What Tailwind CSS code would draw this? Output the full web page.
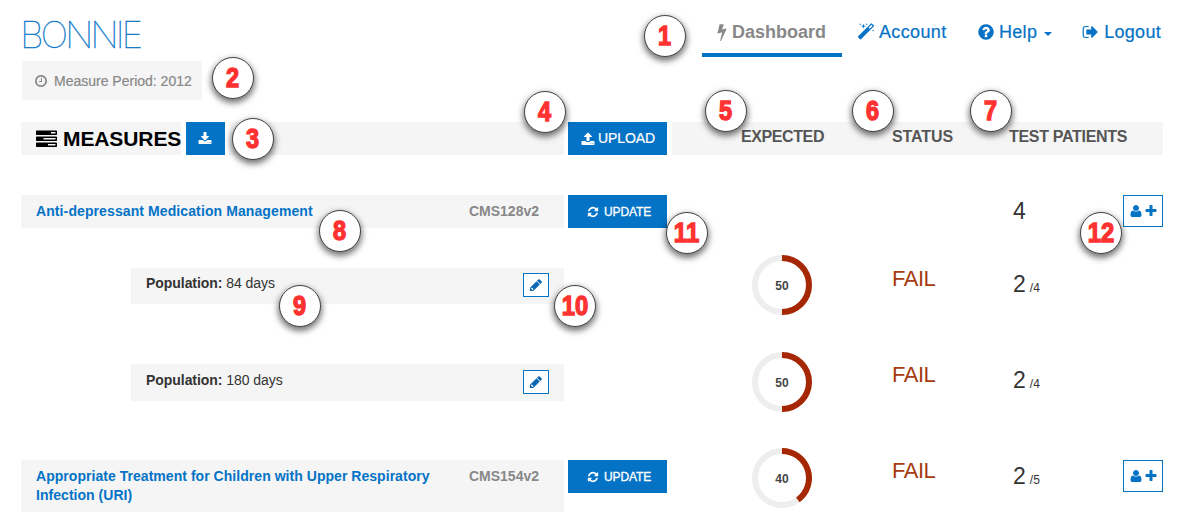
<!DOCTYPE html>
<html lang="en">
<head>
<meta charset="utf-8">
<title>Bonnie</title>
<script src="https://cdn.jsdelivr.net/npm/@tailwindcss/browser@4"></script>
</head>
<body class="relative h-[528px] w-[1187px] overflow-hidden bg-white font-['Liberation_Sans',Arial,sans-serif] text-[14px] leading-5 text-[#333]">
<svg class="hidden">
  <symbol id="pencil" viewBox="0 0 1792 1792"><path d="M491 1536l91-91-235-235-91 91v107h128v128h107zm469-1120l416 416-832 832h-416v-416zm683 96q0 53-37 90l-166 166-416-416 166-165q36-38 90-38 53 0 91 38l235 234q37 39 37 91z"/></symbol>
  <symbol id="plus" viewBox="0 0 1792 1792"><path d="M1600 736v192q0 40-28 68t-68 28h-416v416q0 40-28 68t-68 28h-192q-40 0-68-28t-28-68v-416h-416q-40 0-68-28t-28-68v-192q0-40 28-68t68-28h416v-416q0-40 28-68t68-28h192q40 0 68 28t28 68v416h416q40 0 68 28t28 68z"/></symbol>
  <symbol id="user" viewBox="0 0 1792 1792"><path d="M1600 1405q0 120-73 189.500t-194 69.500h-874q-121 0-194-69.500t-73-189.500q0-53 3.500-103.500t14-109 26.500-108.500 43-97.500 62-81 85.500-53.500 111.500-20q9 0 42 21.500t74.500 48 108 48 133.500 21.500 133.500-21.500 108-48 74.500-48 42-21.500q61 0 111.500 20t85.500 53.500 62 81 43 97.500 26.500 108.500 14 109 3.500 103.500zm-320-893q0 159-112.500 271.500t-271.500 112.500-271.500-112.500-112.500-271.500 112.500-271.500 271.500-112.500 271.500 112.500 112.500 271.500z"/></symbol>
  <symbol id="refresh" viewBox="0 0 1792 1792"><path d="M1639 1056q0 5-1 7-64 268-268 434.5t-478 166.5q-146 0-282.5-55t-243.5-157l-129 129q-19 19-45 19t-45-19-19-45v-448q0-26 19-45t45-19h448q26 0 45 19t19 45-19 45l-137 137q71 66 161 102t187 36q134 0 250-65t186-179q11-17 53-117 8-23 30-23h192q13 0 22.500 9.500t9.500 22.500zm25-800v448q0 26-19 45t-45 19h-448q-26 0-45-19t-19-45 19-45l138-138q-148-137-349-137-134 0-250 65t-186 179q-11 17-53 117-8 23-30 23h-199q-13 0-22.500-9.500t-9.500-22.500v-7q65-268 270-434.500t480-166.500q146 0 284 55.500t245 156.500l130-129q19-19 45-19t45 19 19 45z"/></symbol>
  <symbol id="download" viewBox="0 0 1792 1792"><path d="M1344 1344q0-26-19-45t-45-19-45 19-19 45 19 45 45 19 45-19 19-45zm256 0q0-26-19-45t-45-19-45 19-19 45 19 45 45 19 45-19 19-45zm128-224v320q0 40-28 68t-68 28h-1472q-40 0-68-28t-28-68v-320q0-40 28-68t68-28h465l135 136q58 56 136 56t136-56l136-136h464q40 0 68 28t28 68zm-325-569q17 41-14 70l-448 448q-18 19-45 19t-45-19l-448-448q-31-29-14-70 17-39 59-39h256v-448q0-26 19-45t45-19h256q26 0 45 19t19 45v448h256q42 0 59 39z"/></symbol>
  <symbol id="upload" viewBox="0 0 1792 1792"><path d="M1344 1472q0-26-19-45t-45-19-45 19-19 45 19 45 45 19 45-19 19-45zm256 0q0-26-19-45t-45-19-45 19-19 45 19 45 45 19 45-19 19-45zm128-224v320q0 40-28 68t-68 28h-1472q-40 0-68-28t-28-68v-320q0-40 28-68t68-28h427q21 56 70.500 92t110.500 36h256q61 0 110.500-36t70.500-92h427q40 0 68 28t28 68zm-325-648q-17 40-59 40h-256v448q0 26-19 45t-45 19h-256q-26 0-45-19t-19-45v-448h-256q-42 0-59-40-17-39 14-69l448-448q18-19 45-19t45 19l448 448q31 30 14 69z"/></symbol>
  <symbol id="clock" viewBox="0 0 1792 1792"><path d="M1024 544v448q0 14-9 23t-23 9h-320q-14 0-23-9t-9-23v-64q0-14 9-23t23-9h224v-352q0-14 9-23t23-9h64q14 0 23 9t9 23zm416 352q0-148-73-273t-198-198-273-73-273 73-198 198-73 273 73 273 198 198 273 73 273-73 198-198 73-273zm224 0q0 209-103 385.500t-279.500 279.500-385.500 103-385.500-103-279.500-279.500-103-385.500 103-385.500 279.500-279.500 385.500-103 385.500 103 279.500 279.500 103 385.500z"/></symbol>
  <symbol id="question" viewBox="0 0 1792 1792"><path d="M1024 1376v-192q0-14-9-23t-23-9h-192q-14 0-23 9t-9 23v192q0 14 9 23t23 9h192q14 0 23-9t9-23zm256-672q0-88-55.500-163t-138.500-116-170-41q-243 0-371 213-15 24 8 42l132 100q7 6 19 6 16 0 25-12 53-68 86-92 34-24 86-24 48 0 85.500 26t37.500 59q0 38-20 61t-68 45q-63 28-115.500 86.500t-52.500 125.500v36q0 14 9 23t23 9h192q14 0 23-9t9-23q0-19 21.500-49.500t54.500-49.500q32-18 49-28.500t46-35 44.500-48 28-60.500 12.500-81zm384 192q0 209-103 385.500t-279.500 279.500-385.500 103-385.500-103-279.500-279.500-103-385.500 103-385.500 279.500-279.500 385.500-103 385.500 103 279.500 279.500 103 385.500z"/></symbol>
  <symbol id="signout" viewBox="0 0 1792 1792"><path d="M704 1440q0 4 1 20t.5 26.500-3 23.500-10 19.500-20.500 6.500h-320q-119 0-203.500-84.500t-84.500-203.500v-704q0-119 84.500-203.500t203.500-84.500h320q13 0 22.500 9.500t9.500 22.500q0 4 1 20t.5 26.500-3 23.500-10 19.500-20.500 6.500h-320q-66 0-113 47t-47 113v704q0 66 47 113t113 47h312l11.500 1 11.500 3 8 5.500 7 9 2 13.500zm928-544q0 26-19 45l-544 544q-19 19-45 19t-45-19-19-45v-288h-448q-26 0-45-19t-19-45v-384q0-26 19-45t45-19h448v-288q0-26 19-45t45-19 45 19l544 544q19 19 19 45z"/></symbol>
  <symbol id="bolt" viewBox="0 0 1792 1792"><path d="M1333 566q18 20 7 44l-540 1157q-13 25-42 25-4 0-14-2-17-5-25.500-19t-4.500-30l197-808-406 101q-4 1-12 1-18 0-31-11-18-15-13-39l201-825q4-14 16-23t28-9h328q19 0 32 12.500t13 29.500q0 8-5 18l-171 463 396-98q8-2 12-2 19 0 34 15z"/></symbol>
  <symbol id="magic" viewBox="0 0 1792 1792"><path d="M1254 581l293-293-107-107-293 293zm447-293q0 27-18 45l-1286 1286q-18 18-45 18t-45-18l-198-198q-18-18-18-45t18-45l1286-1286q18-18 45-18t45 18l198 198q18 18 18 45zm-1351-190l98 30-98 30-30 98-30-98-98-30 98-30 30-98zm350 162l196 60-196 60-60 196-60-196-196-60 196-60 60-196zm930 478l98 30-98 30-30 98-30-98-98-30 98-30 30-98zm-640-640l98 30-98 30-30 98-30-98-98-30 98-30 30-98z"/></symbol>
  <symbol id="tasks" viewBox="0 0 1792 1792"><path d="M1024 1408h640v-128h-640v128zm-384-512h1024v-128h-1024v128zm640-512h384v-128h-384v128zm512 832v256q0 26-19 45t-45 19h-1664q-26 0-45-19t-19-45v-256q0-26 19-45t45-19h1664q26 0 45 19t19 45zm0-512v256q0 26-19 45t-45 19h-1664q-26 0-45-19t-19-45v-256q0-26 19-45t45-19h1664q26 0 45 19t19 45zm0-512v256q0 26-19 45t-45 19h-1664q-26 0-45-19t-19-45v-256q0-26 19-45t45-19h1664q26 0 45 19t19 45z"/></symbol>
</svg>

<header class="flex h-[122px] justify-between pl-[22px] pr-[26px]">
  <div class="flex flex-col items-start pt-[14px]">
    <h1 class="-ml-[2px] h-[47px] font-[Inter,sans-serif] text-[37px] font-thin leading-[42px] tracking-[-3.2px] text-[#0473c6] [-webkit-text-stroke:0.3px_#0473c6]">BONNIE</h1>
    <div class="flex h-[39px] w-[180px] items-center gap-[6px] bg-[#f5f5f5] pl-3 text-[#888]">
      <svg class="size-[14px] fill-current"><use href="#clock"/></svg><span class="whitespace-nowrap [-webkit-text-stroke:0.2px_#888]">Measure Period: 2012</span>
    </div>
  </div>
  <nav class="flex h-[57px] text-[18px] leading-[22px] text-[#0473c6]">
    <a class="flex w-[140px] border-b-4 border-[#0473c6] pl-[11px] pt-[21px] font-bold text-[#888]"><svg class="mt-[2px] size-[18px] fill-current"><use href="#bolt"/></svg><span class="ml-[1px]">Dashboard</span></a>
    <a class="flex w-[120px] pl-[15px] pt-[21px] [-webkit-text-stroke:0.2px_#0473c6]"><svg class="mt-[2px] size-[18px] fill-current"><use href="#magic"/></svg><span class="ml-[4px] tracking-[0.35px]">Account</span></a>
    <a class="flex w-[105px] pl-[15px] pt-[21px] [-webkit-text-stroke:0.2px_#0473c6]"><svg class="mt-[2px] size-[18px] fill-current stroke-none"><use href="#question"/></svg><span class="ml-[4px] tracking-[0.3px]">Help</span><i class="ml-[7px] mt-[11px] h-0 border-x-4 border-t-4 border-x-transparent border-t-[#0473c6]"></i></a>
    <a class="flex w-[94px] pl-[15px] pt-[21px] [-webkit-text-stroke:0.2px_#0473c6]"><svg class="mt-[2px] size-[18px] fill-current"><use href="#signout"/></svg><span class="ml-[5px] tracking-[0.3px]">Logout</span></a>
  </nav>
</header>

<main class="ml-[21px] w-[1142px]">
  <div class="flex h-[33px]">
    <div class="flex w-[543px]">
      <h2 class="flex w-[160px] items-center bg-[#f5f5f5] pl-[15px] text-[21px] font-bold text-black"><svg class="mt-[2px] size-[21px] shrink-0 fill-current"><use href="#tasks"/></svg><span class="ml-[6px] mt-[1px] tracking-[-0.1px]">MEASURES</span></h2>
      <button class="ml-[4.500px] grid w-[39px] place-items-center bg-[#0473c6]"><svg class="size-[14px] fill-white"><use href="#download"/></svg></button>
      <div class="ml-[4.500px] flex-1 bg-[#f5f5f5]"></div>
    </div>
    <button class="ml-[4px] flex w-[99px] items-center justify-center bg-[#0473c6] pl-px text-white"><svg class="size-[14px] fill-current"><use href="#upload"/></svg><span class="-mt-[1px] ml-[3px] tracking-[-0.1px] [-webkit-text-stroke:0.2px_white]">UPLOAD</span></button>
    <div class="ml-[5px] flex w-[491px] bg-[#f5f5f5] pl-[69px] pt-[5px] text-[16px] font-bold tracking-[-0.4px] text-[#555]">
      <span class="w-[151px]">EXPECTED</span><span class="w-[117px] tracking-[-0.1px]">STATUS</span><span class="tracking-[-0.3px]">TEST PATIENTS</span>
    </div>
  </div>

  <div class="mt-10 flex h-[33px]">
    <div class="flex w-[543px] justify-between bg-[#f5f5f5] pl-[15px] pr-[25px] pt-[6px] font-bold"><a class="tracking-[0.1px] text-[#0473c6]">Anti-depressant Medication Management</a><span class="text-[#888]">CMS128v2</span></div>
    <button class="ml-[4px] flex w-[99px] items-center justify-center bg-[#0473c6] pl-[3px] text-[12px] text-white"><svg class="size-[12px] fill-current"><use href="#refresh"/></svg><span class="ml-[5px] tracking-[-0.1px] [-webkit-text-stroke:0.3px_white]">UPDATE</span></button>
    <span class="ml-[346px] pt-[4px] text-[23px] leading-[24px]">4</span>
    <button class="ml-auto flex h-[32px] w-10 items-center justify-center gap-px border border-[#0473c6] text-[#0473c6]"><svg class="size-[14px] fill-current"><use href="#user"/></svg><svg class="size-[14px] fill-current"><use href="#plus"/></svg></button>
  </div>

  <div class="mt-[27px] flex h-[60px]">
    <div class="ml-[110px] mt-[13px] flex h-9 w-[433px] justify-between bg-[#f5f5f5] pl-[15px] pr-[15px] pt-[5px]"><span class="tracking-[-0.05px]"><b>Population:</b> 84 days</span><button class="grid h-6 w-[26px] place-items-center border border-[#0473c6] bg-white"><svg class="size-[14px] fill-[#0b68b4]"><use href="#pencil"/></svg></button></div>
    <svg class="ml-[188px] size-[60px]" viewBox="0 0 60 60"><circle cx="30" cy="30" r="27" fill="none" stroke="#eee" stroke-width="6"/><path d="M30 3a27 27 0 0 1 0 54" fill="none" stroke="#a52703" stroke-width="6"/><text x="30" y="34.500" text-anchor="middle" font-size="12" font-weight="700" fill="#444">50</text></svg>
    <span class="ml-[80px] w-[121px] pt-[12px] text-[22px] leading-6 tracking-[-0.5px] text-[#a63a11]">FAIL</span>
    <span class="pt-[17px] text-[23px] leading-6">2<span class="ml-1 text-[12px]">/4</span></span>
  </div>

  <div class="mt-[37px] flex h-[60px]">
    <div class="ml-[110px] mt-[12px] flex h-[37px] w-[433px] justify-between bg-[#f5f5f5] pl-[15px] pr-[15px] pt-[6px]"><span class="tracking-[-0.05px]"><b>Population:</b> 180 days</span><button class="grid h-6 w-[26px] place-items-center border border-[#0473c6] bg-white"><svg class="size-[14px] fill-[#0b68b4]"><use href="#pencil"/></svg></button></div>
    <svg class="ml-[188px] size-[60px]" viewBox="0 0 60 60"><circle cx="30" cy="30" r="27" fill="none" stroke="#eee" stroke-width="6"/><path d="M30 3a27 27 0 0 1 0 54" fill="none" stroke="#a52703" stroke-width="6"/><text x="30" y="34.500" text-anchor="middle" font-size="12" font-weight="700" fill="#444">50</text></svg>
    <span class="ml-[80px] w-[121px] pt-[11px] text-[22px] leading-6 tracking-[-0.5px] text-[#a63a11]">FAIL</span>
    <span class="pt-[16px] text-[23px] leading-6">2<span class="ml-1 text-[12px]">/4</span></span>
  </div>

  <div class="mt-[36px] flex h-[64px]">
    <div class="mt-[12px] flex w-[543px] justify-between bg-[#f5f5f5] pl-[15px] pr-[25px] pt-[7px] font-bold leading-[19px]"><a class="w-[410px] tracking-[0.04px] text-[#0473c6]">Appropriate Treatment for Children with Upper Respiratory Infection (URI)</a><span class="text-[#888]">CMS154v2</span></div>
    <button class="ml-[4px] mt-[12px] flex h-[33px] w-[99px] items-center justify-center bg-[#0473c6] pl-[3px] text-[12px] text-white"><svg class="size-[12px] fill-current"><use href="#refresh"/></svg><span class="ml-[5px] tracking-[-0.1px] [-webkit-text-stroke:0.3px_white]">UPDATE</span></button>
    <svg class="ml-[85px] size-[60px]" viewBox="0 0 60 60"><circle cx="30" cy="30" r="27" fill="none" stroke="#eee" stroke-width="6"/><path d="M30 3a27 27 0 0 1 15.870 48.840" fill="none" stroke="#a52703" stroke-width="6"/><text x="30" y="34.500" text-anchor="middle" font-size="12" font-weight="700" fill="#444">40</text></svg>
    <span class="ml-[80px] w-[121px] pt-[11px] text-[22px] leading-6 tracking-[-0.5px] text-[#a63a11]">FAIL</span>
    <span class="pt-[16px] text-[23px] leading-6">2<span class="ml-1 text-[12px]">/5</span></span>
    <button class="ml-auto mt-[12px] flex h-[32px] w-10 items-center justify-center gap-px border border-[#0473c6] text-[#0473c6]"><svg class="size-[14px] fill-current"><use href="#user"/></svg><svg class="size-[14px] fill-current"><use href="#plus"/></svg></button>
  </div>
</main>

<!-- numbered callouts floating over the page -->
<div class="text-[27px] leading-none text-[#ff3232] [-webkit-text-stroke:1.4px_#ff3232] *:absolute *:grid *:size-[42px] *:place-items-center *:rounded-full *:border *:border-[#444] *:bg-white *:shadow-[0_3px_6px_1px_rgba(0,0,0,0.55)]">
  <div class="left-[644px] top-[15px]"><b class="scale-x-[.87]">1</b></div>
  <div class="left-[212px] top-[57px]"><b class="scale-x-[.87]">2</b></div>
  <div class="left-[232px] top-[118px]"><b class="scale-x-[.87]">3</b></div>
  <div class="left-[524px] top-[91px]"><b class="scale-x-[.87]">4</b></div>
  <div class="left-[705px] top-[90px]"><b class="scale-x-[.87]">5</b></div>
  <div class="left-[852px] top-[90px]"><b class="scale-x-[.87]">6</b></div>
  <div class="left-[970px] top-[90px]"><b class="scale-x-[.87]">7</b></div>
  <div class="left-[319px] top-[210px]"><b class="scale-x-[.87]">8</b></div>
  <div class="left-[279px] top-[285px]"><b class="scale-x-[.87]">9</b></div>
  <div class="left-[554px] top-[285px]"><b class="scale-x-[.88]">10</b></div>
  <div class="left-[666px] top-[212px]"><b class="scale-x-[.88] tracking-[0.5px]">11</b></div>
  <div class="left-[1080px] top-[212px]"><b class="scale-x-[.88]">12</b></div>
</div>
</body>
</html>
